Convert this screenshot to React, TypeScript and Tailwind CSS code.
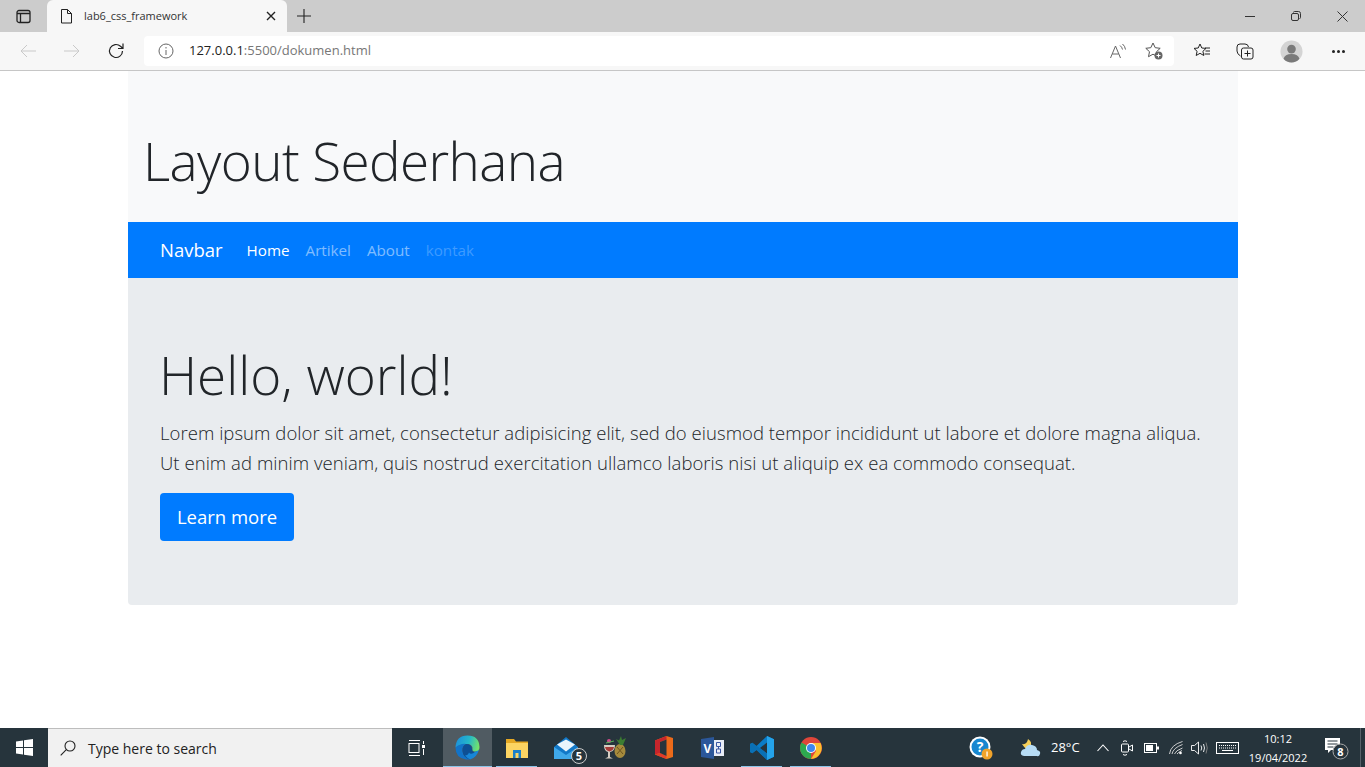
import React from "react";

const F = "font-['Open_Sans','Noto_Sans',sans-serif]";

function Stroke({ w = 16, h = 16, vb = "0 0 16 16", c = "#222", sw = 1, children, cls = "" }: any) {
  return (
    <svg width={w} height={h} viewBox={vb} fill="none" stroke={c} strokeWidth={sw} className={cls}>
      {children}
    </svg>
  );
}

function TabBar() {
  return (
    <div className="h-8 bg-[#cccccc] flex items-end shrink-0">
      <div className="w-12 h-8 flex items-center justify-center pr-[1px]">
        <Stroke w={15} h={15} vb="0 0 15 15" sw={1.3}>
          <rect x="1" y="1.5" width="13" height="12" rx="2" />
          <path d="M1 4.5h13M4.5 4.5v9" />
        </Stroke>
      </div>
      <div className="w-[240px] h-8 ml-[-1px] bg-[#f7f7f7] rounded-t-[6px] flex items-center pl-[13px] pr-[11px]">
        <Stroke w={13} h={16} vb="0 0 13 16" sw={1}>
          <path d="M1.5 1.5h6l4 4v9.5h-10zM7.5 1.5v4h4" />
        </Stroke>
        <span className={`ml-[11px] text-[11px] text-[#333] flex-1 ${F}`}>lab6_css_framework</span>
        <Stroke w={10} h={10} vb="0 0 10 10" sw={1.4}>
          <path d="M1 1l8 8M9 1l-8 8" />
        </Stroke>
      </div>
      <div className="w-[35px] h-8 flex items-center justify-center pr-[2px]">
        <Stroke w={14} h={14} vb="0 0 14 14" sw={1.1}>
          <path d="M7 0v14M0 7h14" />
        </Stroke>
      </div>
      <div className="flex-1" />
      <div className="h-8 flex items-center">
        <div className="w-[46px] flex justify-center">
          <Stroke w={10} h={10} vb="0 0 10 10" c="#333">
            <path d="M0 5.5h10" />
          </Stroke>
        </div>
        <div className="w-[46px] flex justify-center">
          <Stroke w={10} h={10} vb="0 0 10 10" c="#333">
            <rect x=".5" y="2.5" width="7" height="7" rx="1.5" />
            <path d="M2.5 1.5q0-1 1-1h4q2 0 2 2v4q0 1-1 1" />
          </Stroke>
        </div>
        <div className="w-[46px] flex justify-center">
          <Stroke w={11} h={11} vb="0 0 11 11" c="#333">
            <path d="M.5.5l10 10M10.5.5l-10 10" />
          </Stroke>
        </div>
      </div>
    </div>
  );
}

function ToolBar() {
  return (
    <div className="h-[39px] bg-[#f7f7f7] border-b border-[#c6c6c6] flex items-center shrink-0">
      <div className="w-[144px] flex items-center pl-5 shrink-0">
        <Stroke w={16} h={14} vb="0 0 16 14" c="#c9c9c9">
          <path d="M16 7H1M7 1L1 7l6 6" />
        </Stroke>
        <Stroke w={16} h={14} vb="0 0 16 14" c="#c9c9c9" cls="ml-[28px]">
          <path d="M0 7h15M9 1l6 6-6 6" />
        </Stroke>
        <Stroke w={18} h={18} vb="0 0 18 18" c="#222" sw={1.2} cls="ml-[27px]">
          <path d="M15.5 9a6.5 6.5 0 1 1-2-4.700L16 6.500M16 1.500v5h-5" />
        </Stroke>
      </div>
      <div className="w-[1030px] h-[30px] bg-white rounded-[4px] flex items-center pl-[14px] pr-[10px] shrink-0">
        <Stroke w={16} h={16} vb="0 0 16 16" c="#666">
          <circle cx="8" cy="8" r="7" />
          <path d="M8 7v5M8 4v1.5" />
        </Stroke>
        <span className={`ml-[15px] text-[13px] text-[#777] flex-1 ${F}`}>
          <span className="text-[#222]">127.0.0.1</span>:5500/dokumen.html
        </span>
        <Stroke w={17} h={16} vb="0 0 17 16" c="#666">
          <path d="M.5 15L5.500 3l5 12M2.300 11h6.400M10 2.500q2 1.500 2.500 4M12.500 1q2.500 2 3 5.500" />
        </Stroke>
        <svg width="20" height="20" viewBox="0 0 20 20" className="ml-[17px]" fill="none" stroke="#555">
          <path d="M9 2l2.200 4.700 5 .6-3.700 3.400 1 5L9 13.200l-4.500 2.500 1-5L1.800 7.300l5-.6z" />
          <circle cx="14.500" cy="14.500" r="4" fill="#666" stroke="none" />
          <path d="M14.500 12.500v4M12.500 14.500h4" stroke="#fff" />
        </svg>
      </div>
      <div className="flex-1 flex items-center pl-[19px]">
        <svg width="18" height="18" viewBox="0 0 18 18" fill="none" stroke="#222">
          <path d="M7 2l1.800 4 4.200.4-3.100 2.900.9 4.200L7 11.300 3.200 13.500l.9-4.200L1 6.400l4.200-.4zM12 6h5M12.500 9h4.500M11.500 12h5.500" />
        </svg>
        <svg width="18" height="18" viewBox="0 0 18 18" fill="none" stroke="#222" className="ml-[25px]">
          <path d="M4.500 14Q1 12 1 9V5q0-3 3-3h5q3 0 3.500 3" />
          <rect x="5.500" y="6" width="11.500" height="11" rx="2" />
          <path d="M11.500 8.500v6M8.500 11.500h6" />
        </svg>
        <svg width="23" height="23" viewBox="0 0 24 24" className="ml-[26px]">
          <circle cx="12" cy="12" r="11.5" fill="#d4d4d4" />
          <circle cx="12" cy="9.500" r="4.500" fill="#7a7a7a" />
          <path d="M3.700 19.500Q5 14.500 12 14.500t8.300 5Q17 23.500 12 23.500t-8.300-4z" fill="#7a7a7a" />
        </svg>
        <div className="ml-[29px] flex gap-[2px]">
          <span className="w-[3px] h-[3px] rounded-full bg-[#222]" />
          <span className="w-[3px] h-[3px] rounded-full bg-[#222]" />
          <span className="w-[3px] h-[3px] rounded-full bg-[#222]" />
        </div>
      </div>
    </div>
  );
}

function Page() {
  return (
    <div className="flex-1 bg-white">
      <div className={`w-[1110px] ml-[128px] ${F}`}>
        <header className="h-[151px] bg-[#f8f9fa] pl-[15px] pr-4 flex items-end">
          <h1 className="text-[53px] leading-[60px] font-light text-[#212529] pb-[31px] tracking-[-0.6px]">Layout Sederhana</h1>
        </header>
        <nav className="h-14 bg-[#007bff] flex items-center pl-8">
          <a className="text-[18.5px] text-white">Navbar</a>
          <div className="ml-6 flex gap-4 text-[15.2px]">
            <a className="text-white">Home</a>
            <a className="text-white/50">Artikel</a>
            <a className="text-white/50">About</a>
            <a className="text-white/25">kontak</a>
          </div>
        </nav>
        <section className="h-[327px] bg-[#e9ecef] rounded-b-[4px] px-8 pt-[60px]">
          <h2 className="text-[53px] leading-[74px] font-light text-[#212529] ml-[-1px]">Hello, world!</h2>
          <p className="mt-[6px] text-[18.5px] leading-[30px] font-light text-[#212529] tracking-[0.05px]">
            Lorem ipsum dolor sit amet, consectetur adipisicing elit, sed do eiusmod tempor incididunt ut labore et dolore magna aliqua.
            <br />
            Ut enim ad minim veniam, quis nostrud exercitation ullamco laboris nisi ut aliquip ex ea commodo consequat.
          </p>
          <button className="mt-[15px] h-12 w-[134px] rounded-[4px] bg-[#007bff] text-white text-[18.5px]">Learn more</button>
        </section>
      </div>
    </div>
  );
}

function TaskIcon({ children, active = false, hl = false }: any) {
  return (
    <div className={`h-full w-[49px] flex items-center justify-center relative shrink-0 ${hl ? "bg-[#505b62]" : ""}`}>
      {children}
      {active && <span className={`absolute bottom-0 h-[1px] bg-[#8cc4e8] ${hl ? "left-0 right-0" : "left-1 right-1"}`} />}
    </div>
  );
}

function Taskbar() {
  return (
    <div className={`h-[39px] mt-[1px] bg-[#26343c] flex items-stretch shrink-0 text-white ${F}`}>
      <div className="w-12 flex items-center justify-center shrink-0">
        <svg width="17" height="17" viewBox="0 0 17 17" fill="#fff">
          <path d="M0 2.400L7 1.400V8H0zM8 1.300L17 0v8H8zM0 9h7v6.600l-7-1zM8 9h9v8l-9-1.300z" />
        </svg>
      </div>
      <div className="w-[344px] bg-[#f1f1f1] border-t border-[#bdbdbd] flex items-center pl-[12px] shrink-0">
        <Stroke w={16} h={16} vb="0 0 16 16" c="#222" sw={1.1}>
          <circle cx="10" cy="6" r="5" />
          <path d="M6.300 9.700L.7 15.300" />
        </Stroke>
        <span className="ml-[12px] text-[14px] text-[#222]">Type here to search</span>
      </div>
      <div className="w-[51px] flex items-center justify-center shrink-0 pr-[2px]">
        <svg width="17" height="16" viewBox="0 0 17 16" fill="none" stroke="#fff">
          <path d="M1 .5h11M1 15.500h11" />
          <rect x="1" y="3.500" width="10" height="9" />
          <path d="M15.500 1v3M15.500 9v6" />
          <rect x="14" y="5" width="3" height="3" fill="#fff" stroke="none" />
        </svg>
      </div>
      <TaskIcon active hl>
        <svg width="25" height="25" viewBox="0 0 25 25">
          <defs>
            <linearGradient id="e1" x1="0" y1="0.3" x2="1" y2="0.5">
              <stop offset="0" stopColor="#1c8fdc" />
              <stop offset="0.55" stopColor="#25b8c8" />
              <stop offset="1" stopColor="#74e36a" />
            </linearGradient>
          </defs>
          <path d="M.5 12.500Q1 .5 12.500.5 24 .5 24.500 12q0 4.500-4 4.500-3.500 0-3-2 .5-5-5-5.500-7 0-12 3.500z" fill="url(#e1)" />
          <path d="M.5 12.500Q6 8 11 9q-4 2-3.500 7 .5 6 7.500 8-2 .7-4 .5Q.5 23 .5 12.500z" fill="#1273c8" />
          <path d="M7.500 16q-.5-5 3.500-7 6 0 6 5.500 0 2.500 3 2.500-2 5-5 7.500-7-2-7.500-8.500z" fill="#0d4f94" />
          <path d="M14 17.500q2 3 6.500-1 2.500-.5 3.500-2-2 8-9 10-3-1.500-5-4 3 0 4-3z" fill="#1786d8" />
        </svg>
      </TaskIcon>
      <TaskIcon active>
        <svg width="22" height="20" viewBox="0 0 22 20">
          <path d="M0 1h8l2 2.500h12V6H0z" fill="#e5a823" />
          <rect y="5" width="22" height="15" fill="#fcd462" />
          <rect x="7" y="12" width="8" height="8" fill="#1c7fc8" />
          <rect x="9.500" y="15" width="3" height="5" fill="#fcd462" />
        </svg>
      </TaskIcon>
      <TaskIcon>
        <svg width="33" height="27" viewBox="0 0 33 27" className="ml-[9px] mt-[5px]">
          <path d="M0 10L12 0l12 10v12H0z" fill="#1178c8" />
          <path d="M0 10l12 8 12-8v12H0z" fill="#3fa8ea" />
          <path d="M3 7.500L12 2.500l9 5-9 7z" fill="#eaf5fc" />
          <circle cx="25" cy="19" r="7.500" fill="#26343c" stroke="#ccc" />
          <text x="25" y="23" fontSize="11" fontWeight="700" fill="#fff" textAnchor="middle" fontFamily="Open Sans">5</text>
        </svg>
      </TaskIcon>
      <TaskIcon>
        <svg width="24" height="24" viewBox="0 0 24 24">
          <path d="M1 9h11q0 6-5 7v5l3 1.500H2l3-1.500v-5q-4-1-4-7z" fill="#d5cec4" />
          <path d="M2 11h9q-.5 3.500-4.500 4.500-4-1-4.500-4.500z" fill="#a53b38" />
          <ellipse cx="17" cy="15" rx="5.500" ry="7" fill="#a58a3c" />
          <path d="M14 11l6 7M20 11l-6 7" stroke="#6c5420" />
          <path d="M17 9l-4-6 3 1.500L18 0l1 4 4-2-3 7z" fill="#3c7d32" />
          <circle cx="6" cy="5" r="2" fill="#d14a8b" />
          <path d="M3 7l8-2" stroke="#5ab45a" />
        </svg>
      </TaskIcon>
      <TaskIcon>
        <svg width="18" height="23" viewBox="0 0 18 23">
          <path d="M0 4.500L11.500 0 18 2v19l-6.500 2L0 18.500z" fill="#eb6a1a" />
          <path d="M0 4.500L11.500 0v3.500L5 6v11L0 18.500z" fill="#c7252c" />
          <path d="M0 18.500L5 17l6.500 3v3z" fill="#e03a2a" />
          <path d="M5 6l6.500-2.500V20L5 17z" fill="#26343c" />
        </svg>
      </TaskIcon>
      <TaskIcon>
        <svg width="23" height="22" viewBox="0 0 23 22">
          <rect x="11" y="3" width="12" height="16" fill="#e8ecf6" />
          <path d="M15.500 5.500h4v4h-4zM15.500 12h4v4h-4zM17.500 9.500V12" fill="none" stroke="#3955a3" />
          <path d="M0 2L13 0v22L0 20z" fill="#2b579a" />
          <text x="6.500" y="15.500" fontSize="12" fontWeight="700" fill="#fff" textAnchor="middle" fontFamily="Open Sans">V</text>
        </svg>
      </TaskIcon>
      <TaskIcon active>
        <svg width="24" height="24" viewBox="0 0 24 24">
          <path d="M17 0l7 3.200v17.600L17 24 6.500 14 2.300 17.300 0 16V8l2.300-1.300L6.500 10z" fill="#0a7cc7" />
          <path d="M17 6.500L10 12l7 5.500z" fill="#26343c" />
          <path d="M17 0l7 3.200v17.600L17 24z" fill="#24a3ea" />
          <path d="M0 8l2.300-1.300L17 17.500V24L6.500 14 2.300 17.300 0 16z" fill="#0a6db0" opacity=".8" />
        </svg>
      </TaskIcon>
      <TaskIcon active>
        <svg width="22" height="22" viewBox="0 0 22 22">
          <circle cx="11" cy="11" r="11" fill="#e0463a" />
          <path d="M11 11L1.500 5.500A11 11 0 0 0 11 22z" fill="#2da94f" />
          <path d="M11 6h9.500A11 11 0 0 1 11 22l5-8z" fill="#fbc02d" />
          <circle cx="11" cy="11" r="5" fill="#fff" />
          <circle cx="11" cy="11" r="4" fill="#3f88ee" />
        </svg>
      </TaskIcon>
      <div className="flex-1" />
      <div className="w-[50px] flex items-center shrink-0">
        <svg width="24" height="24" viewBox="0 0 24 24">
          <circle cx="11" cy="11" r="10.5" fill="#fff" />
          <circle cx="11" cy="11" r="8.5" fill="#1787d0" />
          <text x="11" y="16" fontSize="14" fontWeight="700" fill="#fff" textAnchor="middle" fontFamily="Open Sans">?</text>
          <circle cx="18" cy="18" r="5.500" fill="#f0a32b" />
          <rect x="17.400" y="15.500" width="1.300" height="5" fill="#fff" />
        </svg>
      </div>
      <div className="flex items-center w-[72px] shrink-0">
        <svg width="23" height="20" viewBox="0 0 23 20">
          <path d="M3 6q5 1 6-5 5 3 2 8t-8-3z" fill="#f6cf57" />
          <path d="M5 18q-4-.5-3-4 1-3 4-3 2-5 7-4 5 1 5 5 4 1 3 4t-3 2z" fill="#b6dcf5" />
        </svg>
        <span className="ml-[9px] text-[13px]">28°C</span>
      </div>
      <div className="flex items-center shrink-0">
        <div className="w-[24px] flex justify-center">
          <Stroke w={12} h={8} vb="0 0 12 8" c="#fff" sw={1.1}>
            <path d="M.5 7L6 1l5.500 6" />
          </Stroke>
        </div>
        <div className="w-[24px] flex justify-center">
          <Stroke w={12} h={18} vb="0 0 12 18" c="#fff" sw={1}>
            <rect x=".5" y="5" width="7" height="8" rx="1" />
            <path d="M8 8l3.500-2v6L8 10M2 2.500q2-1.500 4 0M2 15.500q2 1.500 4 0" />
          </Stroke>
        </div>
        <div className="w-[24px] flex justify-center">
          <svg width="15" height="10" viewBox="0 0 15 10">
            <rect x=".5" y=".5" width="12" height="9" fill="none" stroke="#fff" />
            <rect x="2" y="2" width="7" height="6" fill="#fff" />
            <rect x="13" y="3.500" width="2" height="3" fill="#fff" />
          </svg>
        </div>
        <div className="w-[26px] flex justify-center">
          <Stroke w={14} h={14} vb="0 0 14 14" c="#ddd" sw={.9}>
            <path d="M.5 13Q1.500 4 13.500.5M3 13Q4 7 13.500 3.500M5.500 13Q6.500 9.500 13.500 7M8 13q1-1.500 5-3.500" />
            <circle cx="11.500" cy="12" r="1.300" fill="#fff" stroke="none" />
          </Stroke>
        </div>
        <div className="w-[20px] flex justify-center">
          <Stroke w={17} h={14} vb="0 0 17 14" c="#fff" sw={.9}>
            <path d="M.5 4.500h3l4-3.500v12l-4-3.500h-3z" />
            <path d="M10 4.500q1.500 2.500 0 5M12.500 3q2 4 0 8" />
            <path d="M15 1.500q2.500 5.500 0 11" stroke="#888" />
          </Stroke>
        </div>
        <div className="w-[36px] flex justify-center">
          <svg width="23" height="12" viewBox="0 0 23 12">
            <rect x=".5" y=".5" width="22" height="11" fill="none" stroke="#fff" />
            <path d="M3 3.500h17M3 6h17" stroke="#fff" strokeDasharray="1 1" />
            <path d="M6 8.500h11" stroke="#fff" />
          </svg>
        </div>
      </div>
      <div className="w-[66px] flex flex-col items-center justify-center text-[11px] leading-[19px] shrink-0">
        <span>10:12</span>
        <span>19/04/2022</span>
      </div>
      <div className="w-[49px] flex items-center shrink-0 pl-[14px] pt-[2px]">
        <svg width="24" height="25" viewBox="0 0 24 25">
          <path d="M0 2h15v12H6l-3 3v-3H0z" fill="#fff" />
          <path d="M2.500 5h10M2.500 8h10M2.500 11h6" stroke="#26343c" />
          <circle cx="15.500" cy="15.500" r="7.500" fill="#26343c" stroke="#aaa" />
          <text x="15.500" y="19.500" fontSize="11" fontWeight="700" fill="#fff" textAnchor="middle" fontFamily="Open Sans">8</text>
        </svg>
      </div>
      <div className="w-[5px] border-l border-[#56626a] shrink-0" />
    </div>
  );
}

export default function App() {
  return (
    <div className="h-[767px] w-[1365px] flex flex-col overflow-hidden bg-white">
      <TabBar />
      <ToolBar />
      <Page />
      <Taskbar />
    </div>
  );
}
